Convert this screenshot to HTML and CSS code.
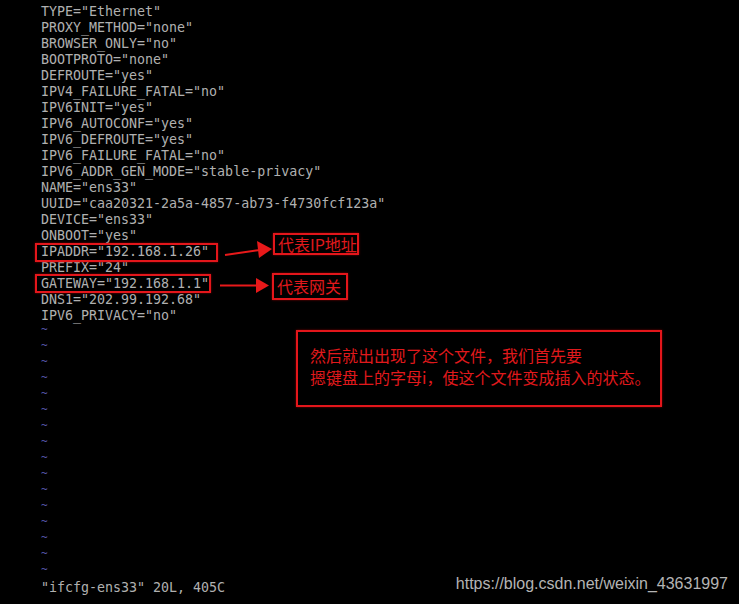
FILE: index.html
```html
<!DOCTYPE html>
<html>
<head>
<meta charset="utf-8">
<link rel="stylesheet" href="styles.css">
</head>
<body>
<div class="screen">
  <div class="term">
    <div class="ln">TYPE="Ethernet"</div>
    <div class="ln">PROXY_METHOD="none"</div>
    <div class="ln">BROWSER_ONLY="no"</div>
    <div class="ln">BOOTPROTO="none"</div>
    <div class="ln">DEFROUTE="yes"</div>
    <div class="ln">IPV4_FAILURE_FATAL="no"</div>
    <div class="ln">IPV6INIT="yes"</div>
    <div class="ln">IPV6_AUTOCONF="yes"</div>
    <div class="ln">IPV6_DEFROUTE="yes"</div>
    <div class="ln">IPV6_FAILURE_FATAL="no"</div>
    <div class="ln">IPV6_ADDR_GEN_MODE="stable-privacy"</div>
    <div class="ln">NAME="ens33"</div>
    <div class="ln">UUID="caa20321-2a5a-4857-ab73-f4730fcf123a"</div>
    <div class="ln">DEVICE="ens33"</div>
    <div class="ln">ONBOOT="yes"</div>
    <div class="ln">IPADDR="192.168.1.26"</div>
    <div class="ln">PREFIX="24"</div>
    <div class="ln">GATEWAY="192.168.1.1"</div>
    <div class="ln">DNS1="202.99.192.68"</div>
    <div class="ln">IPV6_PRIVACY="no"</div>
    <div class="ln tl">~</div>
    <div class="ln tl">~</div>
    <div class="ln tl">~</div>
    <div class="ln tl">~</div>
    <div class="ln tl">~</div>
    <div class="ln tl">~</div>
    <div class="ln tl">~</div>
    <div class="ln tl">~</div>
    <div class="ln tl">~</div>
    <div class="ln tl">~</div>
    <div class="ln tl">~</div>
    <div class="ln tl">~</div>
    <div class="ln tl">~</div>
    <div class="ln tl">~</div>
    <div class="ln tl">~</div>
    <div class="ln tl">~</div>
    <div class="ln">"ifcfg-ens33" 20L, 405C</div>
  </div>

  <div class="hl hl-ip"></div>
  <div class="hl hl-gw"></div>
  <div class="tag tag-ip">代表IP地址</div>
  <div class="tag tag-gw">代表网关</div>
  <svg class="arrows" width="739" height="604" viewBox="0 0 739 604">
    <line x1="225" y1="255" x2="260" y2="250" stroke="#e8191a" stroke-width="2"/>
    <polygon points="257,241 259,258 272,249" fill="#e8191a"/>
    <line x1="220" y1="285.5" x2="259" y2="285.5" stroke="#e8191a" stroke-width="2"/>
    <polygon points="256,278 256,293 269,285.5" fill="#e8191a"/>
  </svg>
  <div class="note">
    <div>然后就出出现了这个文件，我们首先要</div>
    <div>摁键盘上的字母i，使这个文件变成插入的状态。</div>
  </div>
  <div class="mark">https://blog.csdn.net/weixin_43631997</div>
</div>
</body>
</html>
```

FILE: styles.css
```css
html, body {
  margin: 0;
  padding: 0;
  background: #000;
}
.screen {
  position: relative;
  width: 739px;
  height: 604px;
  overflow: hidden;
  background: #000;
}
.term {
  padding: 4px 0 0 41px;
  font-family: "DejaVu Sans Mono", "Liberation Mono", monospace;
  font-size: 13.3px;
  color: #b0b0b0;
}
.ln {
  height: 16px;
  line-height: 16px;
  white-space: pre;
}
.tl {
  color: #5a58b0;
  font-size: 11px;
  line-height: 12px;
}
.hl {
  position: absolute;
  border: 2px solid #e3161b;
  box-shadow: 0 0 2px rgba(160, 0, 0, 0.8);
}
.hl-ip {
  left: 35px;
  top: 243px;
  width: 179px;
  height: 15px;
}
.hl-gw {
  left: 35px;
  top: 274px;
  width: 172px;
  height: 15px;
}
.tag {
  position: absolute;
  border: 2px solid #e3161b;
  box-shadow: 0 0 2px rgba(160, 0, 0, 0.8);
  color: #e0191c;
  font-family: "Noto Sans CJK SC", sans-serif;
  font-size: 16px;
  line-height: 18px;
  padding: 0 0 0 3px;
}
.tag-ip {
  left: 273px;
  top: 233px;
  width: 79px;
  height: 18px;
}
.tag-gw {
  left: 272px;
  top: 273px;
  width: 69px;
  height: 23px;
  line-height: 23px;
}
.arrows {
  position: absolute;
  left: 0;
  top: 0;
}
.note {
  position: absolute;
  left: 296px;
  top: 330px;
  width: 366px;
  height: 77px;
  box-sizing: border-box;
  border: 2px solid #e3161b;
  box-shadow: 0 0 2px rgba(160, 0, 0, 0.8);
  padding: 12px 0 0 12px;
  color: #e0191c;
  font-family: "Noto Sans CJK SC", sans-serif;
  font-size: 16px;
  line-height: 22px;
  display: flex;
  flex-direction: column;
}
.mark {
  position: absolute;
  right: 11px;
  top: 575px;
  font-family: "Liberation Sans", Arial, sans-serif;
  font-size: 16px;
  line-height: 18px;
  color: #b4b4b4;
}
```
